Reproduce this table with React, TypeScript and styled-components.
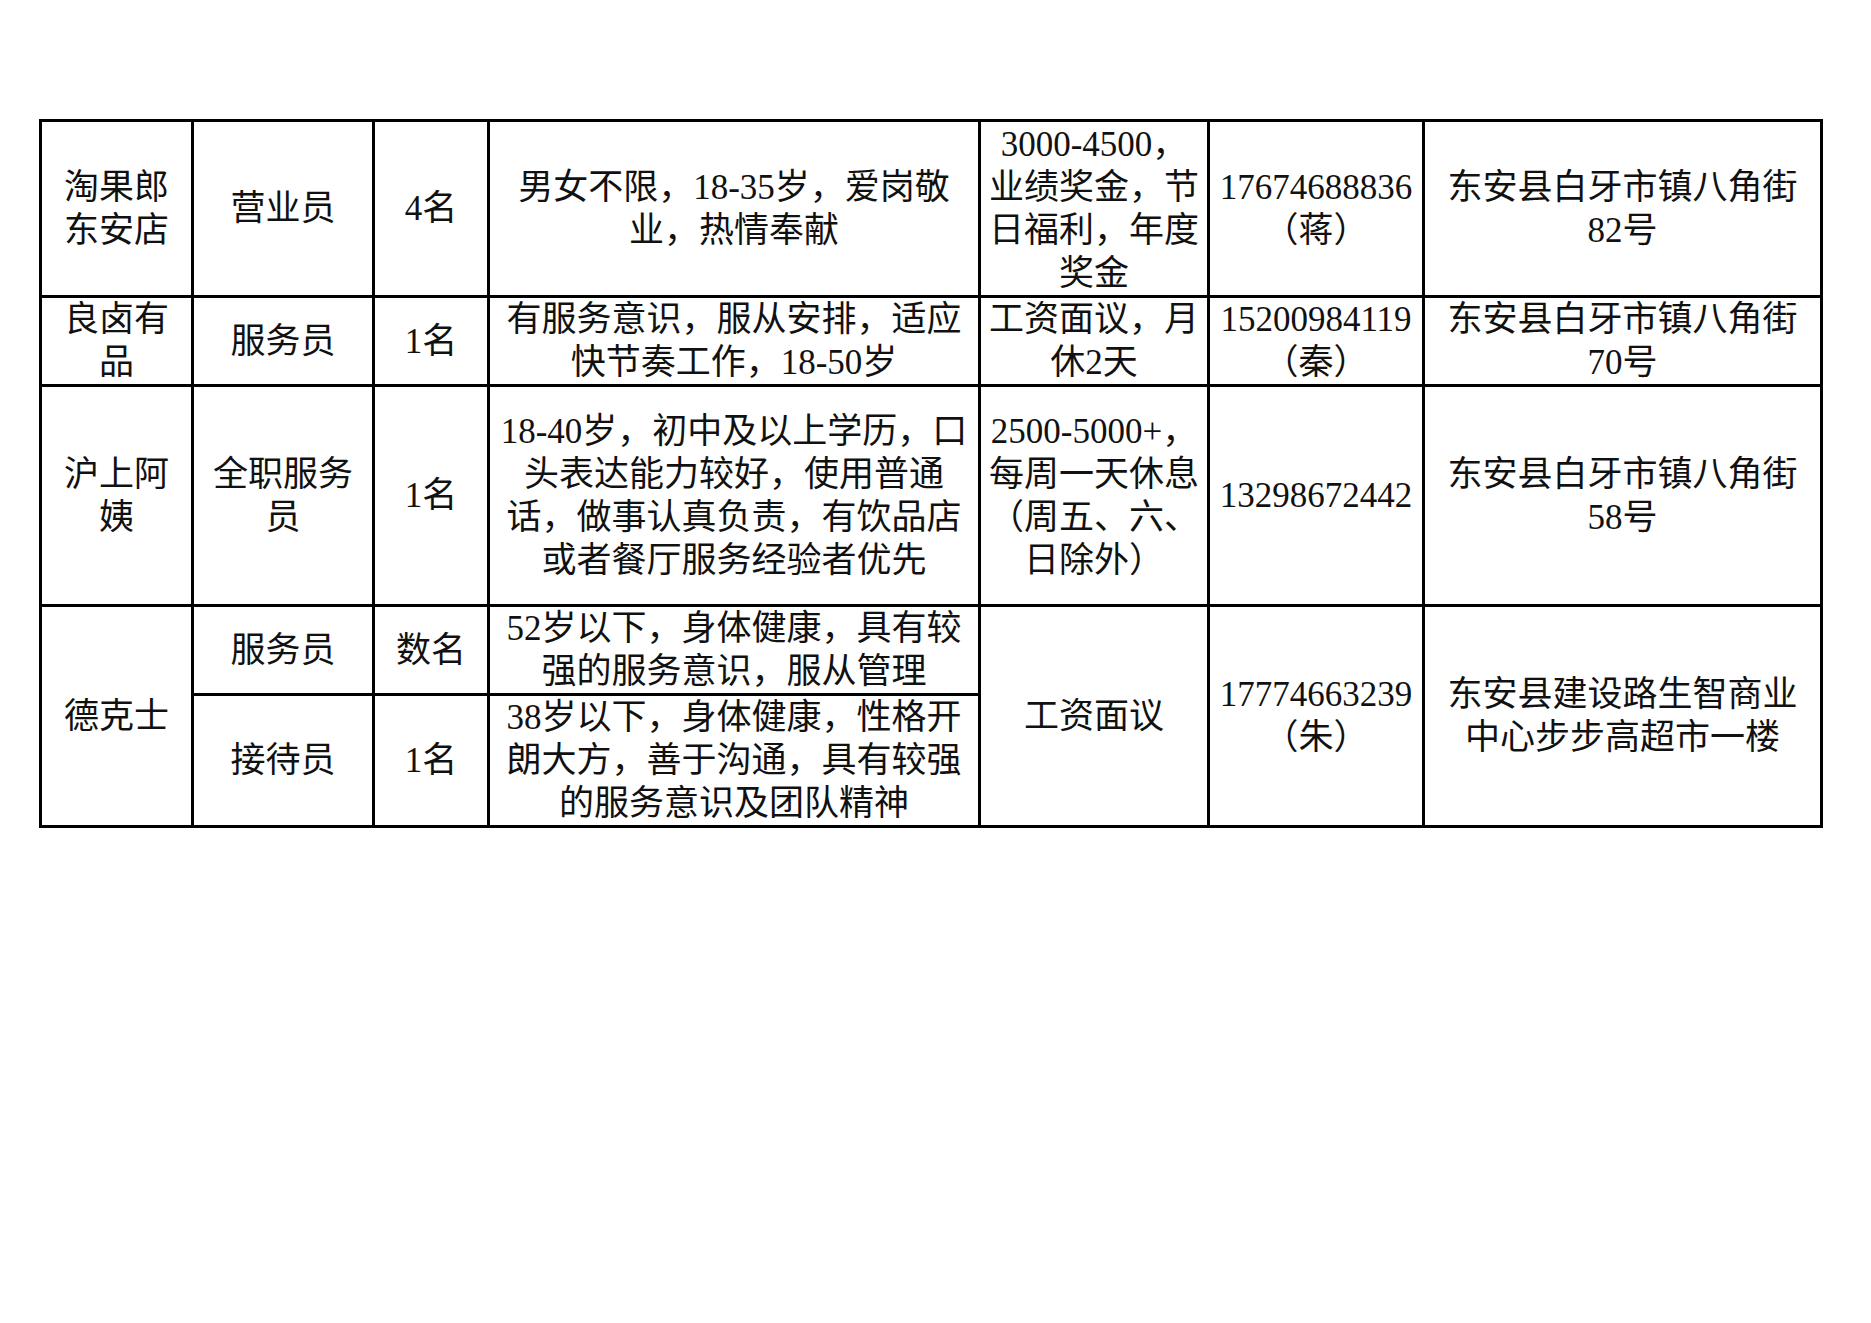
import React from 'react'
import styled, { createGlobalStyle } from 'styled-components'

const GlobalStyle = createGlobalStyle`
  html, body {
    margin: 0;
    padding: 0;
    background: #fff;
  }
  body {
    font-family: 'Liberation Serif', 'Noto Sans CJK SC', serif;
    color: #000;
  }
`

const Page = styled.div`
  width: 1871px;
  min-height: 1323px;
  padding: 119px 0 0 39px;
  box-sizing: border-box;
  background: #fff;
`

const Sheet = styled.table`
  width: 1784px;
  border-collapse: collapse;
  table-layout: fixed;
  border: 3px solid #000;
`

const Row = styled.tr<{ $h: number }>`
  height: ${(p) => p.$h}px;
`

const Cell = styled.td`
  border: 3px solid #000;
  padding: 0 2px;
  text-align: center;
  vertical-align: middle;
  white-space: nowrap;
  font-size: 35px;
  line-height: 43px;
  font-weight: 400;
  color: #111;
  overflow: hidden;
`

const widths = [152, 181, 115, 491, 229, 215, 398]

const Lines = ({ text }: { text: string }) => (
  <>
    {text.split('\n').map((line, i) => (
      <React.Fragment key={i}>
        {i > 0 && <br />}
        {line}
      </React.Fragment>
    ))}
  </>
)

const App = () => {
  return (
    <>
      <GlobalStyle />
      <Page>
        <Sheet>
          <colgroup>
            {widths.map((w, i) => (
              <col key={i} style={{ width: w }} />
            ))}
          </colgroup>
          <tbody>
            <Row $h={176}>
              <Cell><Lines text={'淘果郎\n东安店'} /></Cell>
              <Cell>营业员</Cell>
              <Cell>4名</Cell>
              <Cell><Lines text={'男女不限，18-35岁，爱岗敬\n业，热情奉献'} /></Cell>
              <Cell><Lines text={'3000-4500，\n业绩奖金，节\n日福利，年度\n奖金'} /></Cell>
              <Cell><Lines text={'17674688836\n（蒋）'} /></Cell>
              <Cell><Lines text={'东安县白牙市镇八角街\n82号'} /></Cell>
            </Row>
            <Row $h={88}>
              <Cell><Lines text={'良卤有\n品'} /></Cell>
              <Cell>服务员</Cell>
              <Cell>1名</Cell>
              <Cell><Lines text={'有服务意识，服从安排，适应\n快节奏工作，18-50岁'} /></Cell>
              <Cell><Lines text={'工资面议，月\n休2天'} /></Cell>
              <Cell><Lines text={'15200984119\n（秦）'} /></Cell>
              <Cell><Lines text={'东安县白牙市镇八角街\n70号'} /></Cell>
            </Row>
            <Row $h={220}>
              <Cell><Lines text={'沪上阿\n姨'} /></Cell>
              <Cell><Lines text={'全职服务\n员'} /></Cell>
              <Cell>1名</Cell>
              <Cell>
                <Lines
                  text={
                    '18-40岁，初中及以上学历，口\n头表达能力较好，使用普通\n话，做事认真负责，有饮品店\n或者餐厅服务经验者优先'
                  }
                />
              </Cell>
              <Cell><Lines text={'2500-5000+，\n每周一天休息\n（周五、六、\n日除外）'} /></Cell>
              <Cell>13298672442</Cell>
              <Cell><Lines text={'东安县白牙市镇八角街\n58号'} /></Cell>
            </Row>
            <Row $h={89}>
              <Cell rowSpan={2}>德克士</Cell>
              <Cell>服务员</Cell>
              <Cell>数名</Cell>
              <Cell><Lines text={'52岁以下，身体健康，具有较\n强的服务意识，服从管理'} /></Cell>
              <Cell rowSpan={2}>工资面议</Cell>
              <Cell rowSpan={2}><Lines text={'17774663239\n（朱）'} /></Cell>
              <Cell rowSpan={2}><Lines text={'东安县建设路生智商业\n中心步步高超市一楼'} /></Cell>
            </Row>
            <Row $h={132}>
              <Cell>接待员</Cell>
              <Cell>1名</Cell>
              <Cell>
                <Lines text={'38岁以下，身体健康，性格开\n朗大方，善于沟通，具有较强\n的服务意识及团队精神'} />
              </Cell>
            </Row>
          </tbody>
        </Sheet>
      </Page>
    </>
  )
}

export default App
